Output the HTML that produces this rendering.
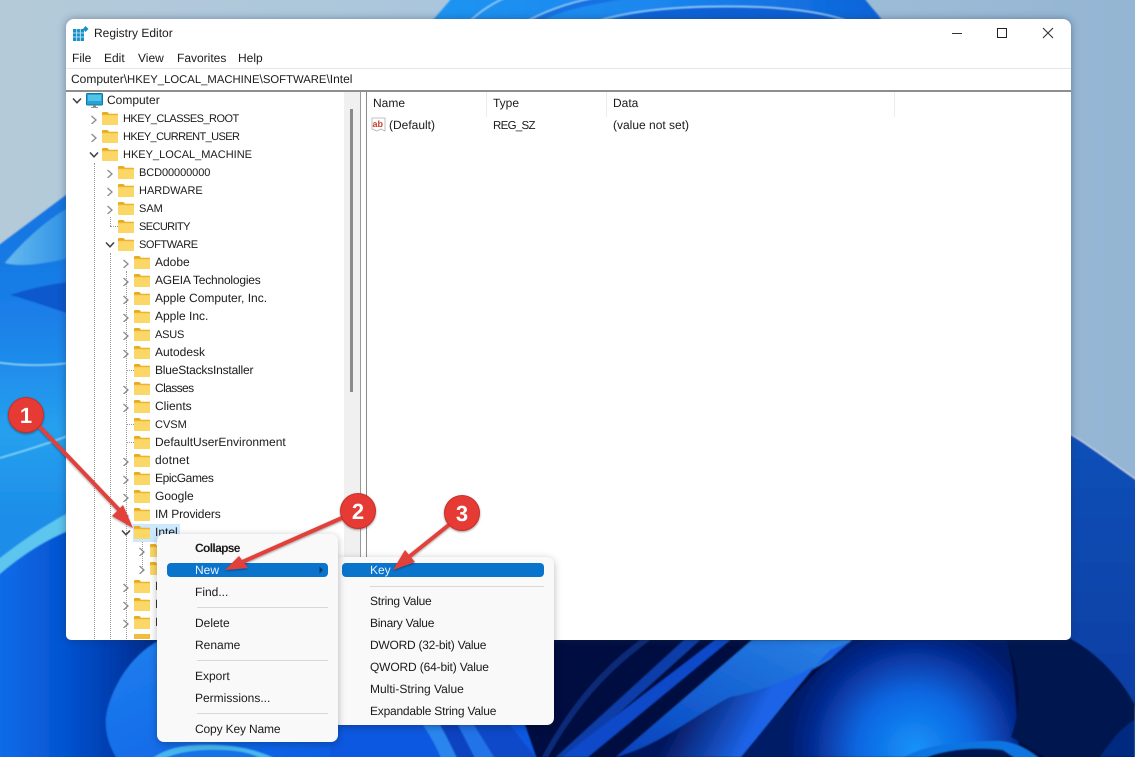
<!DOCTYPE html>
<html><head><meta charset="utf-8"><title>Registry Editor</title>
<style>
html,body{margin:0;padding:0}
body{width:1135px;height:757px;overflow:hidden;position:relative;background:#a9c3d8;font-family:"Liberation Sans",sans-serif;color:#1b1b1b;text-rendering:geometricPrecision}
.a{position:absolute}
.t{position:absolute;white-space:nowrap;font-size:12px;line-height:18px;height:18px}
.c{font-size:11px}
.tr .c{margin-top:1px}
.win{position:absolute;left:66px;top:19px;width:1005px;height:621px;background:#fff;border-radius:8px 8px 5px 5px;overflow:hidden;box-shadow:0 0 8px rgba(30,50,80,.45)}
.m{position:absolute;background:#f9f9f9;border-radius:7px;box-shadow:0 2px 8px rgba(0,0,0,.28)}
.hl{position:absolute;background:#0a74cc;border-radius:4px;height:14px}
.sep{position:absolute;height:1px;background:#d8d8d8}
.dv{position:absolute;width:0;border-left:1px dotted #999}
.dh{position:absolute;height:0;border-top:1px dotted #999}
svg{position:absolute;overflow:visible}
</style></head><body>

<svg class="a" style="left:0;top:0" width="1135" height="757" viewBox="0 0 1135 757">
<defs>
<linearGradient id="bg" x1="0" y1="0" x2="1" y2="0"><stop offset="0" stop-color="#b4cad9"/><stop offset=".4" stop-color="#aac6dc"/><stop offset="1" stop-color="#94b5d3"/></linearGradient>
<linearGradient id="left" x1="0" y1="0" x2="0" y2="1"><stop offset="0" stop-color="#1473e0"/><stop offset=".22" stop-color="#1a7fe8"/><stop offset=".42" stop-color="#26a0ee"/><stop offset=".58" stop-color="#1c8de8"/><stop offset="1" stop-color="#1c8de8"/></linearGradient>
<linearGradient id="topb" x1="0" y1="0" x2="1" y2="0"><stop offset="0" stop-color="#1f94f2"/><stop offset=".5" stop-color="#1a86ee"/><stop offset="1" stop-color="#0d62d8"/></linearGradient>
<radialGradient id="lobe" cx="915" cy="750" r="130" gradientUnits="userSpaceOnUse"><stop offset="0" stop-color="#1592fa"/><stop offset=".45" stop-color="#0d66e0"/><stop offset=".8" stop-color="#052a90"/><stop offset="1" stop-color="#031a66"/></radialGradient>
<linearGradient id="blob" x1="0" y1="0" x2="1" y2="1"><stop offset="0" stop-color="#1f80ee"/><stop offset="1" stop-color="#0a5ce4"/></linearGradient>
<linearGradient id="bl" gradientUnits="userSpaceOnUse" x1="0" y1="0" x2="165" y2="0"><stop offset="0" stop-color="#0a6ce8"/><stop offset=".4" stop-color="#0553d0"/><stop offset=".75" stop-color="#0438a6"/><stop offset="1" stop-color="#032680"/></linearGradient>
<linearGradient id="rgt" x1="0" y1="0" x2="0" y2="1"><stop offset="0" stop-color="#1150b8"/><stop offset="1" stop-color="#0a3da2"/></linearGradient>
<linearGradient id="wedge" x1="0" y1="0" x2="1" y2="0"><stop offset="0" stop-color="#66bbee"/><stop offset="1" stop-color="#2e90e6"/></linearGradient>
<linearGradient id="band" x1="1" y1="0" x2="0" y2="1"><stop offset="0" stop-color="#2a84e6"/><stop offset=".6" stop-color="#125cd0"/><stop offset="1" stop-color="#0a3fb8"/></linearGradient>
<linearGradient id="wdg" gradientUnits="userSpaceOnUse" x1="680" y1="710" x2="745" y2="745"><stop offset="0" stop-color="#03165c"/><stop offset="1" stop-color="#1c64e8"/></linearGradient>
<filter id="s"><feGaussianBlur stdDeviation=".7"/></filter>
<filter id="sh" x="-20%" y="-20%" width="140%" height="140%"><feDropShadow dx="0" dy="1" stdDeviation="1" flood-color="#000" flood-opacity=".4"/></filter>
<symbol id="f" viewBox="0 0 16 14"><path d="M0 2.200C0 1.400.5 1 1.200 1H5.500L7 2.700H15c.6 0 1 .4 1 1V4H0z" fill="#e8ac1e"/><rect x="0" y="3" width="16" height="11" rx=".8" fill="#fbd768"/><rect x="0" y="3" width="16" height="1.200" fill="#eeb32a"/></symbol>
<symbol id="r" viewBox="0 -1 8 10"><path d="M1.500 1L6 5 1.500 9" fill="none" stroke="#8a8a8a" stroke-width="1.300"/></symbol>
<symbol id="d" viewBox="0 0 10 8"><path d="M1 1.500L5 5.800 9 1.500" fill="none" stroke="#404040" stroke-width="1.500"/></symbol>
</defs>
<rect width="1135" height="757" fill="url(#bg)"/>
<g filter="url(#s)">
<path d="M431 22C440 12 446 5 452 -2H864C870 6 878 14 885 24V60H431z" fill="url(#topb)"/>
<path d="M529 22C550 8 575 0 601 -3H640C600 2 560 10 540 22z" fill="#0f66dc" opacity=".7"/>
<path d="M471 20C482 10 495 2 507 -3" fill="none" stroke="#8fd4fa" stroke-width="1.300"/>
<path d="M529 20C552 8 578 0 601 -3" fill="none" stroke="#8fd4fa" stroke-width="1.300"/>
<path d="M601 20C640 8 700 5 760 7C800 9 830 14 850 22" fill="none" stroke="#8fd4fa" stroke-width="1.300"/>
<path d="M601 22C640 9 700 6 760 8C800 10 830 15 850 24z" fill="#0b58d0" opacity=".75"/>
<path d="M-5 248L70 192V760H-5z" fill="url(#left)"/>
<path d="M70 207C45 220 20 245 5 263C25 268 50 262 70 258z" fill="url(#wedge)"/>
<path d="M70 282C50 284 25 290 10 295C30 300 50 308 70 314z" fill="#0a58cc"/>
<path d="M-5 362C20 366 45 366 70 363" stroke="#8fdcf6" stroke-width="1.200" fill="none"/>
<path d="M0 458C20 452 45 445 70 435" stroke="#7ed8f4" stroke-width="1.500" fill="none"/>
<path d="M-5 578C20 556 45 540 70 530H165V760H-5z" fill="url(#bl)"/>
<path d="M-5 562C20 542 45 525 70 512V530C45 540 20 556 -5 578z" fill="#5bc6ee"/>
<path d="M160 640C130 655 110 690 106 717C105 735 110 748 118 760H345V640z" fill="url(#blob)"/>
<path d="M150 760C165 748 185 744 215 745C240 746 258 750 278 760z" fill="#4cc0f0" opacity=".9"/>
<path d="M160 760C180 750 205 749 225 750C245 751 255 755 264 760z" fill="#1672e8"/>
<path d="M330 630H1135V760H330z" fill="#020e40"/>
<path d="M330 630H500C505 670 520 710 537 760H330z" fill="#0a58e0"/>
<path d="M423 725L440 725C446 735 452 748 458 760H442C437 748 430 735 423 725z" fill="#2a86ee"/>
<path d="M440 725H458L476 760H458C452 748 446 735 440 725z" fill="#0842c0"/>
<path d="M458 725H474L496 760H476z" fill="#2272e8"/>
<path d="M474 725H510C520 738 530 750 538 760H496z" fill="#0a48c8"/>
<path d="M684 640L700 640L570 757H556z" fill="#0a3ea8"/>
<path d="M640 640L650 640C610 670 580 700 548 757H542C570 705 600 670 640 640z" fill="#0a2a78"/>
<path d="M715 640H738L590 757H562z" fill="#0c48c8"/>
<path d="M730 640H752L616 757H588z" fill="#021040"/>
<path d="M752 640H855C820 672 770 690 730 700C695 720 660 745 616 757z" fill="url(#band)"/>
<path d="M855 640C825 665 770 690 730 697C695 715 660 745 616 757H741C780 710 810 670 830 650z" fill="url(#wdg)"/>
<path d="M852 640C815 670 780 710 741 757H1020C1015 720 1018 690 1007 640z" fill="url(#lobe)"/>
<path d="M1007 640C1018 670 1024 700 1011 737L1045 757H1135V640z" fill="#03154f"/>
<path d="M1100 757C1115 735 1125 725 1135 720V757z" fill="#062a80"/>
<path d="M904 757C925 745 960 741 1000 741C1015 742 1030 750 1041 760z" fill="#0f74e2"/>
<path d="M920 760C940 750 975 746 1003 750L1018 760z" fill="#04174f"/>
<path d="M1065 431C1090 445 1115 465 1140 482V716C1125 680 1095 650 1065 636z" fill="url(#rgt)"/>
<path d="M1065 431C1090 445 1115 465 1140 482" fill="none" stroke="#cfe3f4" stroke-width="1"/>
</g>
</svg>

<div class="win"></div>
<div class="a" style="left:66px;top:19px;width:1005px;height:621px;overflow:hidden;border-radius:8px 8px 5px 5px">
<div class="a" style="left:0;top:49px;width:1005px;height:1px;background:#e6e6e6"></div>
<div class="a" style="left:0;top:71px;width:1005px;height:2px;background:#8e8e8e"></div>
<div class="a" style="left:278px;top:73px;width:16px;height:548px;background:#f0f0f0"></div>
<div class="a" style="left:284px;top:90px;width:3px;height:283px;background:#8a8a8a"></div>
<div class="a" style="left:294px;top:73px;width:1px;height:548px;background:#9a9a9a"></div>
<div class="a" style="left:299.500px;top:73px;width:1px;height:548px;background:#8a8a8a"></div>
<div class="a" style="left:420px;top:73px;width:1px;height:25px;background:#ececec"></div>
<div class="a" style="left:540px;top:73px;width:1px;height:25px;background:#ececec"></div>
<div class="a" style="left:828px;top:73px;width:1px;height:25px;background:#ececec"></div>
</div>

<svg style="left:73px;top:26px" width="16" height="16" viewBox="0 0 16 16"><rect x="0" y="3" width="11" height="12" fill="#1590c8"/><path d="M3.700 3V15M7.300 3V15M0 7H11M0 11H11" stroke="#d8f0fa" stroke-width=".8"/><path d="M12.500 0L15.500 3 12.500 6 10 3z" fill="#1590c8"/></svg>
<div class="t" style="left:94px;top:24px">Registry Editor</div>
<div class="t" style="left:72px;top:49px">File</div>
<div class="t" style="left:104px;top:49px">Edit</div>
<div class="t" style="left:138px;top:49px">View</div>
<div class="t" style="left:177px;top:49px">Favorites</div>
<div class="t" style="left:238px;top:49px">Help</div>
<svg style="left:952px;top:28px" width="10" height="10" viewBox="0 0 10 10"><path d="M0 5.500H10" stroke="#333" stroke-width="1"/></svg>
<svg style="left:997px;top:28px" width="10" height="10" viewBox="0 0 10 10"><rect x=".5" y=".5" width="9" height="9" fill="none" stroke="#222" stroke-width="1"/></svg>
<svg style="left:1043px;top:28px" width="10" height="10" viewBox="0 0 10 10"><path d="M0 0L10 10M10 0L0 10" stroke="#333" stroke-width="1.100"/></svg>
<div class="t" style="left:71px;top:70px">Computer\<span class="c" style="font-size:11.300px">HKEY_LOCAL_MACHINE</span>\<span class="c" style="font-size:11.300px">SOFTWARE</span>\Intel</div>

<div class="tr">
<div class="t" style="left:373px;top:94px">Name</div>
<div class="t" style="left:493px;top:94px">Type</div>
<div class="t" style="left:613px;top:94px">Data</div>
<svg style="left:371px;top:117px" width="16" height="16" viewBox="0 0 16 16"><path d="M1 1H14V14L10 12 6 14 1 12z" fill="#fff" stroke="#b0b0b0" stroke-width=".8"/><text x="1.500" y="10" font-family="Liberation Sans" font-weight="bold" font-size="9" fill="#c8402c">ab</text></svg>
<div class="t" style="left:389px;top:116px">(Default)</div>
<div class="t c" style="left:493px;top:116px;letter-spacing:-.7px;font-size:11.500px">REG_SZ</div>
<div class="t" style="left:613px;top:116px">(value not set)</div>

<div class="dv" style="left:94px;top:163px;height:476px"></div>
<div class="dv" style="left:110px;top:253px;height:386px"></div>
<div class="dv" style="left:126px;top:271px;height:368px"></div>
<div class="dv" style="left:110px;top:217px;height:9px"></div>
<div class="dh" style="left:110px;top:226px;width:8px"></div>
<div class="dh" style="left:126px;top:370px;width:8px"></div>
<div class="dh" style="left:126px;top:424px;width:8px"></div>
<div class="dh" style="left:126px;top:442px;width:8px"></div>
<div class="dv" style="left:142px;top:541px;height:30px"></div>

<svg style="left:72px;top:97px" width="10" height="8"><use href="#d" width="10" height="8"/></svg>
<svg style="left:86px;top:93px" width="18" height="16" viewBox="0 0 18 16"><rect x=".5" y=".5" width="16" height="11.500" rx="1" fill="#22a4d8" stroke="#15759c"/><rect x="2" y="2" width="13" height="6" fill="#52c4ea"/><rect x="7" y="12" width="3" height="2" fill="#888"/><rect x="5" y="14" width="7" height="1" fill="#999"/></svg>
<div class="t" style="left:107px;top:91px">Computer</div>

<svg style="left:90px;top:114px" width="8" height="10"><use href="#r" width="8" height="10"/></svg>
<svg style="left:102px;top:111px" width="16" height="14"><use href="#f" width="16" height="14"/></svg>
<div class="t c" style="left:123px;top:109px;letter-spacing:-.53px">HKEY_CLASSES_ROOT</div>
<svg style="left:90px;top:132px" width="8" height="10"><use href="#r" width="8" height="10"/></svg>
<svg style="left:102px;top:129px" width="16" height="14"><use href="#f" width="16" height="14"/></svg>
<div class="t c" style="left:123px;top:127px;letter-spacing:-.6px">HKEY_CURRENT_USER</div>
<svg style="left:89px;top:151px" width="10" height="8"><use href="#d" width="10" height="8"/></svg>
<svg style="left:102px;top:147px" width="16" height="14"><use href="#f" width="16" height="14"/></svg>
<div class="t c" style="left:123px;top:145px">HKEY_LOCAL_MACHINE</div>

<svg style="left:106px;top:168px" width="8" height="10"><use href="#r" width="8" height="10"/></svg>
<svg style="left:118px;top:165px" width="16" height="14"><use href="#f" width="16" height="14"/></svg>
<div class="t c" style="left:139px;top:163px;letter-spacing:-.08px">BCD00000000</div>
<svg style="left:106px;top:186px" width="8" height="10"><use href="#r" width="8" height="10"/></svg>
<svg style="left:118px;top:183px" width="16" height="14"><use href="#f" width="16" height="14"/></svg>
<div class="t c" style="left:139px;top:181px">HARDWARE</div>
<svg style="left:106px;top:204px" width="8" height="10"><use href="#r" width="8" height="10"/></svg>
<svg style="left:118px;top:201px" width="16" height="14"><use href="#f" width="16" height="14"/></svg>
<div class="t c" style="left:139px;top:199px">SAM</div>
<svg style="left:118px;top:219px" width="16" height="14"><use href="#f" width="16" height="14"/></svg>
<div class="t c" style="left:139px;top:217px;letter-spacing:-.6px">SECURITY</div>
<svg style="left:105px;top:241px" width="10" height="8"><use href="#d" width="10" height="8"/></svg>
<svg style="left:118px;top:237px" width="16" height="14"><use href="#f" width="16" height="14"/></svg>
<div class="t c" style="left:139px;top:235px;letter-spacing:-.4px">SOFTWARE</div>

<svg style="left:122px;top:258px" width="8" height="10"><use href="#r" width="8" height="10"/></svg>
<svg style="left:134px;top:255px" width="16" height="14"><use href="#f" width="16" height="14"/></svg>
<div class="t" style="left:155px;top:253px">Adobe</div>
<svg style="left:122px;top:276px" width="8" height="10"><use href="#r" width="8" height="10"/></svg>
<svg style="left:134px;top:273px" width="16" height="14"><use href="#f" width="16" height="14"/></svg>
<div class="t" style="left:155px;top:271px;letter-spacing:-.2px">AGEIA Technologies</div>
<svg style="left:122px;top:294px" width="8" height="10"><use href="#r" width="8" height="10"/></svg>
<svg style="left:134px;top:291px" width="16" height="14"><use href="#f" width="16" height="14"/></svg>
<div class="t" style="left:155px;top:289px">Apple Computer, Inc.</div>
<svg style="left:122px;top:312px" width="8" height="10"><use href="#r" width="8" height="10"/></svg>
<svg style="left:134px;top:309px" width="16" height="14"><use href="#f" width="16" height="14"/></svg>
<div class="t" style="left:155px;top:307px">Apple Inc.</div>
<svg style="left:122px;top:330px" width="8" height="10"><use href="#r" width="8" height="10"/></svg>
<svg style="left:134px;top:327px" width="16" height="14"><use href="#f" width="16" height="14"/></svg>
<div class="t c" style="left:155px;top:325px;letter-spacing:-.2px">ASUS</div>
<svg style="left:122px;top:348px" width="8" height="10"><use href="#r" width="8" height="10"/></svg>
<svg style="left:134px;top:345px" width="16" height="14"><use href="#f" width="16" height="14"/></svg>
<div class="t" style="left:155px;top:343px">Autodesk</div>
<svg style="left:134px;top:363px" width="16" height="14"><use href="#f" width="16" height="14"/></svg>
<div class="t" style="left:155px;top:361px;letter-spacing:-.2px">BlueStacksInstaller</div>
<svg style="left:122px;top:384px" width="8" height="10"><use href="#r" width="8" height="10"/></svg>
<svg style="left:134px;top:381px" width="16" height="14"><use href="#f" width="16" height="14"/></svg>
<div class="t" style="left:155px;top:379px;letter-spacing:-.6px">Classes</div>
<svg style="left:122px;top:402px" width="8" height="10"><use href="#r" width="8" height="10"/></svg>
<svg style="left:134px;top:399px" width="16" height="14"><use href="#f" width="16" height="14"/></svg>
<div class="t" style="left:155px;top:397px">Clients</div>
<svg style="left:134px;top:417px" width="16" height="14"><use href="#f" width="16" height="14"/></svg>
<div class="t c" style="left:155px;top:415px">CVSM</div>
<svg style="left:134px;top:435px" width="16" height="14"><use href="#f" width="16" height="14"/></svg>
<div class="t" style="left:155px;top:433px">DefaultUserEnvironment</div>
<svg style="left:122px;top:456px" width="8" height="10"><use href="#r" width="8" height="10"/></svg>
<svg style="left:134px;top:453px" width="16" height="14"><use href="#f" width="16" height="14"/></svg>
<div class="t" style="left:155px;top:451px;letter-spacing:.2px">dotnet</div>
<svg style="left:122px;top:474px" width="8" height="10"><use href="#r" width="8" height="10"/></svg>
<svg style="left:134px;top:471px" width="16" height="14"><use href="#f" width="16" height="14"/></svg>
<div class="t" style="left:155px;top:469px;letter-spacing:-.4px">EpicGames</div>
<svg style="left:122px;top:492px" width="8" height="10"><use href="#r" width="8" height="10"/></svg>
<svg style="left:134px;top:489px" width="16" height="14"><use href="#f" width="16" height="14"/></svg>
<div class="t" style="left:155px;top:487px">Google</div>
<svg style="left:122px;top:510px" width="8" height="10"><use href="#r" width="8" height="10"/></svg>
<svg style="left:134px;top:507px" width="16" height="14"><use href="#f" width="16" height="14"/></svg>
<div class="t" style="left:155px;top:505px;letter-spacing:-.15px">IM Providers</div>
<div class="a" style="left:133px;top:524px;width:47px;height:18px;background:#cce8ff"></div>
<svg style="left:121px;top:529px" width="10" height="8"><use href="#d" width="10" height="8"/></svg>
<svg style="left:134px;top:525px" width="16" height="14"><use href="#f" width="16" height="14"/></svg>
<div class="t" style="left:155px;top:523px">Intel</div>

<svg style="left:138px;top:546px" width="8" height="10"><use href="#r" width="8" height="10"/></svg>
<svg style="left:150px;top:543px" width="16" height="14"><use href="#f" width="16" height="14"/></svg>
<svg style="left:138px;top:564px" width="8" height="10"><use href="#r" width="8" height="10"/></svg>
<svg style="left:150px;top:561px" width="16" height="14"><use href="#f" width="16" height="14"/></svg>
<svg style="left:122px;top:582px" width="8" height="10"><use href="#r" width="8" height="10"/></svg>
<svg style="left:134px;top:579px" width="16" height="14"><use href="#f" width="16" height="14"/></svg>
<div class="t" style="left:155px;top:577px">I</div>
<svg style="left:122px;top:600px" width="8" height="10"><use href="#r" width="8" height="10"/></svg>
<svg style="left:134px;top:597px" width="16" height="14"><use href="#f" width="16" height="14"/></svg>
<div class="t" style="left:155px;top:595px">I</div>
<svg style="left:122px;top:618px" width="8" height="10"><use href="#r" width="8" height="10"/></svg>
<svg style="left:134px;top:615px" width="16" height="14"><use href="#f" width="16" height="14"/></svg>
<div class="t" style="left:155px;top:613px">I</div>
<div class="a" style="left:134px;top:634px;width:16px;height:5px;background:#f3bd3c"></div>
</div>

<div class="m" style="left:333px;top:557px;width:221px;height:168px"></div>
<div class="hl" style="left:342px;top:563px;width:202px"></div>
<div class="t" style="left:370px;top:561px;color:#e8f2fb">Key</div>
<div class="sep" style="left:370px;top:586px;width:174px"></div>
<div class="t" style="left:370px;top:592px;letter-spacing:-.25px">String Value</div>
<div class="t" style="left:370px;top:614px;letter-spacing:-.25px">Binary Value</div>
<div class="t" style="left:370px;top:636px;letter-spacing:-.25px">DWORD (32-bit) Value</div>
<div class="t" style="left:370px;top:658px;letter-spacing:-.15px">QWORD (64-bit) Value</div>
<div class="t" style="left:370px;top:680px">Multi-String Value</div>
<div class="t" style="left:370px;top:702px;letter-spacing:-.22px">Expandable String Value</div>

<div class="m" style="left:157px;top:534px;width:181px;height:208px"></div>
<div class="hl" style="left:167px;top:563px;width:161px"></div>
<div class="t" style="left:195px;top:539px;font-weight:bold;letter-spacing:-.65px">Collapse</div>
<div class="t" style="left:195px;top:561px;color:#e8f2fb">New</div>
<svg style="left:319px;top:566px" width="5" height="8" viewBox="0 0 5 8"><path d="M.5 .5L4 4 .5 7.500z" fill="#0a3a66"/></svg>
<div class="t" style="left:195px;top:583px">Find...</div>
<div class="sep" style="left:197px;top:607px;width:131px"></div>
<div class="t" style="left:195px;top:614px">Delete</div>
<div class="t" style="left:195px;top:636px">Rename</div>
<div class="sep" style="left:197px;top:660px;width:131px"></div>
<div class="t" style="left:195px;top:667px">Export</div>
<div class="t" style="left:195px;top:689px">Permissions...</div>
<div class="sep" style="left:197px;top:713px;width:131px"></div>
<div class="t" style="left:195px;top:720px;letter-spacing:-.15px">Copy Key Name</div>

<svg style="left:0;top:0" width="1135" height="757" viewBox="0 0 1135 757">
<g filter="url(#sh)">
<path d="M39 426L124 515" stroke="#e2403b" stroke-width="4" fill="none"/>
<path d="M133 528L112 516 123 505z" fill="#e2403b"/>
<path d="M344 517L240 563" stroke="#e2403b" stroke-width="4" fill="none"/>
<path d="M225 570L248 568 239 556z" fill="#e2403b"/>
<path d="M450 524L405 560" stroke="#e2403b" stroke-width="4" fill="none"/>
<path d="M393 570L415 562 405 550z" fill="#e2403b"/>
<circle cx="26" cy="415" r="17.500" fill="#e63a35" stroke="#c62f2b" stroke-width="1"/>
<circle cx="358" cy="511" r="17.500" fill="#e63a35" stroke="#c62f2b" stroke-width="1"/>
<circle cx="462" cy="513" r="17.500" fill="#e63a35" stroke="#c62f2b" stroke-width="1"/>
</g>
<text x="26" y="423" text-anchor="middle" font-family="Liberation Sans" font-weight="bold" font-size="22" fill="#fff">1</text>
<text x="358" y="519" text-anchor="middle" font-family="Liberation Sans" font-weight="bold" font-size="22" fill="#fff">2</text>
<text x="462" y="521" text-anchor="middle" font-family="Liberation Sans" font-weight="bold" font-size="22" fill="#fff">3</text>
</svg>
</body></html>
